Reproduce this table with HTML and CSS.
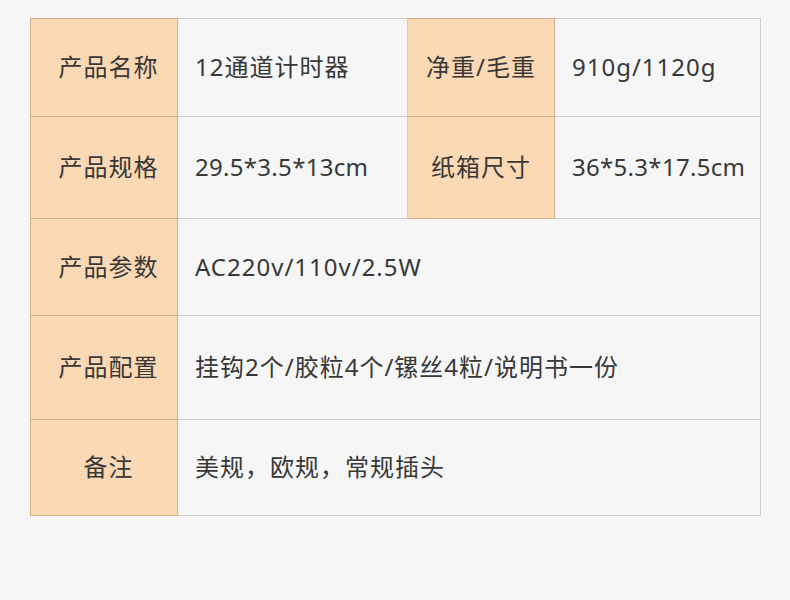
FILE: index.html
```html
<!DOCTYPE html>
<html lang="zh">
<head>
<meta charset="utf-8">
<link rel="stylesheet" href="styles.css">
</head>
<body>
<table class="spec">
  <colgroup>
    <col class="c-label"><col class="c-val"><col class="c-label"><col class="c-val2">
  </colgroup>
  <tr class="r1">
    <th class="first">产品名称</th><td>12通道计时器</td>
    <th>净重/毛重</th><td>910g/1120g</td>
  </tr>
  <tr class="r2">
    <th class="first">产品规格</th><td class="tight">29.5*3.5*13cm</td>
    <th>纸箱尺寸</th><td class="tight">36*5.3*17.5cm</td>
  </tr>
  <tr class="r3">
    <th class="first">产品参数</th><td colspan="3">AC220v/110v/2.5W</td>
  </tr>
  <tr class="r4">
    <th class="first">产品配置</th><td colspan="3">挂钩2个/胶粒4个/镙丝4粒/说明书一份</td>
  </tr>
  <tr class="r5">
    <th class="first">备注</th><td colspan="3">美规，欧规，常规插头</td>
  </tr>
</table>
</body>
</html>
```
FILE: styles.css
```css
html, body {
  margin: 0;
  padding: 0;
  background: #f6f6f6;
}
body {
  padding: 18px 0 0 30px;
  font-family: "Noto Sans", "Noto Sans CJK SC", sans-serif;
  color: #383838;
}
.spec {
  border-collapse: collapse;
  table-layout: fixed;
  width: 730px;
}
.c-label { width: 147px; }
.c-val { width: 230px; }
.c-val2 { width: 206px; }
.spec th, .spec td {
  border: 1px solid #cdcdcd;
  font-size: 24px;
  font-weight: 400;
  letter-spacing: 1px;
  padding: 0;
  line-height: 1.2;
}
.spec th {
  background: #fbd9b5;
  border-color: #d3ae8b;
  text-align: center;
}
.spec th.first {
  padding-left: 9px;
}
.spec td {
  text-align: left;
  padding-left: 17px;
  padding-right: 0;
  white-space: nowrap;
}
.spec td.tight {
  letter-spacing: 0.3px;
}
.r1 { height: 98px; }
.r2 { height: 102px; }
.r3 { height: 97px; }
.r4 { height: 104px; }
.r5 { height: 96px; }
```
